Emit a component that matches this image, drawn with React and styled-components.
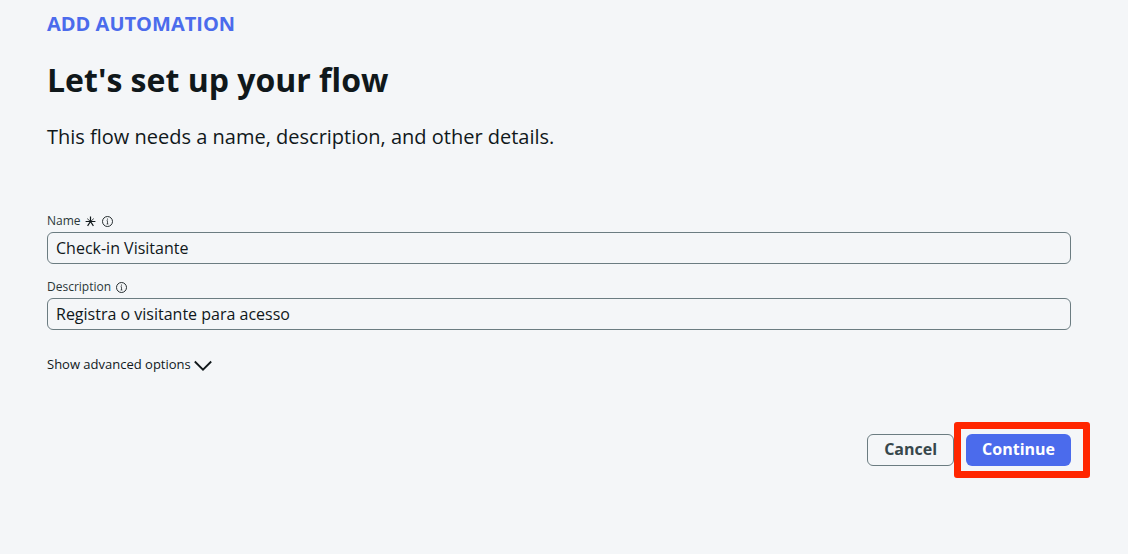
import React from "react";
import styled, { createGlobalStyle } from "styled-components";

const GlobalStyle = createGlobalStyle`
  * { box-sizing: border-box; }
  body {
    margin: 0;
    background: #f4f6f8;
    color: #10181b;
    font-family: "Open Sans", "Noto Sans", sans-serif;
  }
`;

const Page = styled.main`
  padding: 8px 57px 88px 47px;
`;

const Eyebrow = styled.p`
  margin: 0 0 24px;
  color: #4b6bec;
  font-size: 20px;
  line-height: 32px;
  font-weight: 700;
`;

const Title = styled.h1`
  margin: 0 0 25px;
  font-size: 32px;
  line-height: 32px;
  font-weight: 700;
`;

const Intro = styled.p`
  margin: 0 0 60px;
  font-size: 20px;
  line-height: 32px;
`;

const Field = styled.div`
  display: flex;
  flex-direction: column;
  gap: 3px;
  margin-bottom: 15px;
`;

const LabelRow = styled.div`
  display: flex;
  align-items: center;
  gap: 4px;
  height: 16px;
`;

const Label = styled.label`
  color: #2a3639;
  font-size: 12px;
  line-height: 16px;
`;

const Icon = styled.svg`
  display: block;
  flex: none;
  fill: none;
  stroke: currentColor;
`;

const TextInput = styled.input`
  width: 100%;
  height: 32px;
  padding: 0 8px;
  border: 1px solid #6b7c81;
  border-radius: 6px;
  background: transparent;
  color: #10181b;
  font: 400 16px/24px "Open Sans", "Noto Sans", sans-serif;
`;

const AdvancedToggle = styled.button`
  display: flex;
  align-items: center;
  gap: 3px;
  margin-top: 24px;
  padding: 0;
  border: 0;
  background: none;
  color: #10181b;
  font: 400 13px/20px "Open Sans", "Noto Sans", sans-serif;
  cursor: pointer;
`;

const Actions = styled.div`
  display: flex;
  justify-content: flex-end;
  gap: 12px;
  margin-top: 60px;
`;

const Button = styled.button`
  height: 32px;
  padding: 0 16px 2px;
  border: ${(p) => (p.$primary ? "0" : "1px solid #6b7c81")};
  border-radius: 6px;
  background: ${(p) => (p.$primary ? "#4b6bec" : "transparent")};
  color: ${(p) => (p.$primary ? "#ffffff" : "#37474b")};
  font: 700 16px/24px "Open Sans", "Noto Sans", sans-serif;
  cursor: pointer;
`;

const Highlighted = styled.div`
  position: relative;
  display: flex;

  &::after {
    content: "";
    position: absolute;
    inset: -12px -19px -12px -12px;
    border: 7px solid #ff2600;
    border-radius: 3px;
    pointer-events: none;
  }
`;

function RequiredIcon() {
  return (
    <Icon width="12" height="14" viewBox="0 0 12 14" role="img" aria-label="required">
      <path d="M5.5 2.5V7.5M0.6 7.5H10.4M2.6 11.8L5.5 7.5L8.4 11.8" strokeWidth="1.2" />
      <path d="M2.2 4.6L5.5 7.5L8.8 4.6" strokeWidth="0.8" />
    </Icon>
  );
}

function InfoIcon() {
  return (
    <Icon width="12" height="14" viewBox="0 0 12 14" role="img" aria-label="information">
      <circle cx="6.5" cy="7.5" r="5" strokeWidth="0.9" />
      <path d="M5.6 6.7H6.5V10M5.6 10h1.8" strokeWidth="0.7" />
      <circle cx="6.5" cy="5" r="0.6" fill="currentColor" stroke="none" />
    </Icon>
  );
}

function ChevronIcon() {
  return (
    <Icon width="18" height="18" viewBox="0 0 18 18" strokeWidth="1.8" aria-hidden="true">
      <path d="M0.8 6.5L9 14.7L17.2 6.5" />
    </Icon>
  );
}

function TextField({ id, label, value, required }) {
  return (
    <Field>
      <LabelRow>
        <Label htmlFor={id}>{label}</Label>
        {required && <RequiredIcon />}
        <InfoIcon />
      </LabelRow>
      <TextInput id={id} type="text" defaultValue={value} required={required} />
    </Field>
  );
}

export default function App() {
  return (
    <>
      <GlobalStyle />
      <Page>
        <Eyebrow>ADD AUTOMATION</Eyebrow>
        <Title>Let's set up your flow</Title>
        <Intro>This flow needs a name, description, and other details.</Intro>
        <form onSubmit={(e) => e.preventDefault()}>
          <TextField id="flow-name" label="Name" value="Check-in Visitante" required />
          <TextField id="flow-description" label="Description" value="Registra o visitante para acesso" />
          <AdvancedToggle type="button" aria-expanded="false">
            Show advanced options
            <ChevronIcon />
          </AdvancedToggle>
          <Actions>
            <Button type="button">Cancel</Button>
            <Highlighted>
              <Button type="submit" $primary>Continue</Button>
            </Highlighted>
          </Actions>
        </form>
      </Page>
    </>
  );
}
